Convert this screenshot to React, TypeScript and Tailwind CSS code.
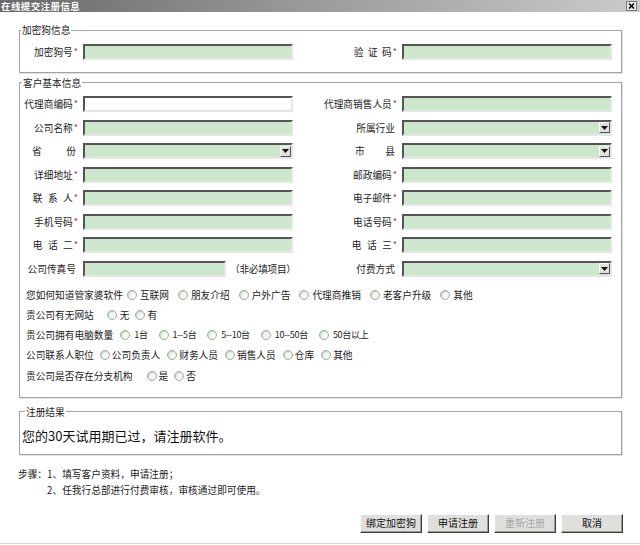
import clsx from "clsx";

const FONT = { fontFamily: '"Noto Sans CJK SC", "Noto Sans", sans-serif' };

const sunken =
	"h-[16px] border-2 border-t-[#555] border-l-[#555] border-b-[#e6e6e6] border-r-[#e6e6e6] outline-none";

const TextBox = (props: { w?: string; white?: boolean }) => (
	<input
		type="text"
		readOnly
		className={clsx(
			sunken,
			"shrink-0",
			props.w ?? "w-[210px]",
			props.white ? "bg-white" : "bg-[#cce7cc]"
		)}
	/>
);

const SelectBox = () => (
	<div className={clsx(sunken, "shrink-0 w-[210px] bg-[#cce7cc] flex items-center justify-end")}>
		<span className="w-[11px] h-[11px] bg-[#e2e0dc] border border-t-[#f8f8f8] border-l-[#f8f8f8] border-b-[#555] border-r-[#555] flex items-center justify-center">
			<svg width="7" height="4" viewBox="0 0 7 4">
				<path d="M0 0h7L3.5 4z" fill="#111" />
			</svg>
		</span>
	</div>
);

// label text, right-aligned, optional red star
const Label = (props: { text: string; star?: boolean; w: string; spread?: string }) => (
	<div className={clsx("shrink-0 flex justify-end items-center text-[#222]", props.w, !props.star && "pr-[2px]")}>
		{props.spread ? (
			<span className={clsx("flex justify-between", props.spread)}>
				{props.text.split("").map((c, i) => (
					<span key={i}>{c}</span>
				))}
			</span>
		) : (
			<span>{props.text}</span>
		)}
		{props.star && <span className="text-[#b0303a] ml-[1px] text-[9px]">*</span>}
	</div>
);

const Row = (props: { children: React.ReactNode }) => (
	<div className="flex items-center h-[23.5px]">{props.children}</div>
);

const Radio = (props: { text: string; sp: string; tx: string }) => (
	<span className={clsx("inline-flex items-center", props.sp)}>
		<span className="w-[10px] h-[10px] rounded-full border border-[#a2ada2] bg-[#f1f6f1] shadow-[inset_1px_1px_1px_#c3d3c3]" />
		<span className={props.tx}>{props.text}</span>
	</span>
);

const RadioRow = (props: {
	label: string;
	items: string[];
	gap: string;
	sp: string;
	tx: string;
	extra?: string;
}) => (
	<div className={clsx("flex items-center h-[20px] pl-[6px] whitespace-nowrap", props.extra)}>
		<span className={props.gap}>{props.label}</span>
		{props.items.map((t) => (
			<Radio key={t} text={t} sp={props.sp} tx={props.tx} />
		))}
	</div>
);

const Btn = (props: { text: string; disabled?: boolean }) => (
	<button
		className={clsx(
			"w-[62px] h-[19px] bg-[#e0dfdc] border border-t-white border-l-white border-b-[#3c3c3c] border-r-[#3c3c3c] shadow-[inset_-1px_-1px_0_#9c9c9c] text-[10px] leading-none",
			props.disabled ? "text-[#a8a8a8]" : "text-[#111]"
		)}
	>
		{props.text}
	</button>
);

export default function App() {
	return (
		<div className="w-[640px] h-[545px] bg-white overflow-hidden flex flex-col text-[9.7px] leading-[12px] text-[#222]" style={FONT}>
			{/* title bar */}
			<div className="h-[12px] shrink-0 flex items-center justify-between bg-gradient-to-r from-[#6a6a6a] via-[#9c9c9c] to-[#cbcbcb]">
				<span className="pl-[1px] text-white font-bold text-[9.5px] leading-[11px] tracking-[0.4px]">在线提交注册信息</span>
				<span className="mr-[3px] w-[11px] h-[10px] bg-[#e8e8e8] border border-[#777] flex items-center justify-center">
					<svg width="7" height="6" viewBox="0 0 7 6">
						<path d="M1 0.5l5 5M6 0.5l-5 5" stroke="#000" strokeWidth="1.5" />
					</svg>
				</span>
			</div>

			{/* 加密狗信息 */}
			<fieldset className="mt-[12px] ml-[19px] mr-[18px] border border-[#a2a2a2] shadow-[1px_1px_0_#e2e2e2] pt-[4px] pb-[8px]">
				<legend className="ml-[1px] px-[1px] leading-[12px]">加密狗信息</legend>
				<Row>
					<Label w="w-[58px]" text="加密狗号" star />
					<span className="ml-[5px]" />
					<TextBox />
					<Label w="w-[104px]" text="验证码" star spread="w-[38px]" />
					<span className="ml-[5px]" />
					<TextBox />
				</Row>
			</fieldset>

			{/* 客户基本信息 */}
			<fieldset className="mt-[4px] ml-[19px] mr-[18px] border border-[#a2a2a2] shadow-[1px_1px_0_#e2e2e2] pt-[4px] pb-[11px]">
				<legend className="ml-[2px] px-[1px] leading-[12px]">客户基本信息</legend>
				<Row>
					<Label w="w-[58px]" text="代理商编码" star />
					<span className="ml-[5px]" />
					<TextBox white />
					<Label w="w-[104px]" text="代理商销售人员" star />
					<span className="ml-[5px]" />
					<TextBox />
				</Row>
				<Row>
					<Label w="w-[58px]" text="公司名称" star />
					<span className="ml-[5px]" />
					<TextBox />
					<Label w="w-[104px]" text="所属行业" />
					<span className="ml-[5px]" />
					<SelectBox />
				</Row>
				<Row>
					<Label w="w-[58px]" text="省份" spread="w-[44px]" />
					<span className="ml-[5px]" />
					<SelectBox />
					<Label w="w-[104px]" text="市县" spread="w-[40px]" />
					<span className="ml-[5px]" />
					<SelectBox />
				</Row>
				<Row>
					<Label w="w-[58px]" text="详细地址" star />
					<span className="ml-[5px]" />
					<TextBox />
					<Label w="w-[104px]" text="邮政编码" star />
					<span className="ml-[5px]" />
					<TextBox />
				</Row>
				<Row>
					<Label w="w-[58px]" text="联系人" star spread="w-[40px]" />
					<span className="ml-[5px]" />
					<TextBox />
					<Label w="w-[104px]" text="电子邮件" star />
					<span className="ml-[5px]" />
					<TextBox />
				</Row>
				<Row>
					<Label w="w-[58px]" text="手机号码" star />
					<span className="ml-[5px]" />
					<TextBox />
					<Label w="w-[104px]" text="电话号码" star />
					<span className="ml-[5px]" />
					<TextBox />
				</Row>
				<Row>
					<Label w="w-[58px]" text="电话二" star spread="w-[40px]" />
					<span className="ml-[5px]" />
					<TextBox />
					<Label w="w-[104px]" text="电话三" star spread="w-[40px]" />
					<span className="ml-[5px]" />
					<TextBox />
				</Row>
				<Row>
					<div className="w-[273px] shrink-0 flex items-center">
						<Label w="w-[58px]" text="公司传真号" />
						<span className="ml-[5px]" />
						<TextBox w="w-[143px]" />
						<span className="shrink-0 ml-[4px] whitespace-nowrap tracking-[-0.3px]">（非必填项目）</span>
					</div>
					<Label w="w-[104px]" text="付费方式" />
					<span className="ml-[5px]" />
					<SelectBox />
				</Row>

				<div className="mt-[4px]">
					<RadioRow
						label="您如何知道管家婆软件"
						gap="mr-[-5px]"
						sp="ml-[9px]"
						tx="ml-[3px]"
						items={["互联网", "朋友介绍", "户外广告", "代理商推销", "老客户升级", "其他"]}
					/>
					<RadioRow label="贵公司有无网站" gap="mr-[8px]" sp="ml-[5px]" tx="ml-[3px]" items={["无", "有"]} />
					<RadioRow
						label="贵公司拥有电脑数量"
						gap="mr-[-4px]"
						sp="ml-[11px] text-[9px] tracking-[-0.3px]"
						tx="ml-[4px]"
						items={["1台", "1--5台", "5--10台", "10--50台", "50台以上"]}
					/>
					<RadioRow
						label="公司联系人职位"
						gap="mr-[-1px]"
						sp="ml-[7px]"
						tx="ml-[2px]"
						items={["公司负责人", "财务人员", "销售人员", "仓库", "其他"]}
					/>
					<RadioRow
						label="贵公司是否存在分支机构"
						extra="mt-[1px]"
						gap="mr-[8px]"
						sp="ml-[6px]"
						tx="ml-[2px]"
						items={["是", "否"]}
					/>
				</div>
			</fieldset>

			{/* 注册结果 */}
			<fieldset className="mt-[8px] ml-[19px] mr-[18px] border border-[#a2a2a2] shadow-[1px_1px_0_#e2e2e2] pt-[9px] pb-[9px] pl-[2px]">
				<legend className="ml-[3px] px-[1px] leading-[12px]">注册结果</legend>
				<p className="text-[13px] leading-[18px] text-[#111]">您的30天试用期已过，请注册软件。</p>
			</fieldset>

			{/* steps */}
			<div className="mt-[11px] ml-[18px] flex leading-[16px]">
				<span>步骤：</span>
				<div className="flex flex-col">
					<span>1、填写客户资料，申请注册；</span>
					<span>2、任我行总部进行付费审核，审核通过即可使用。</span>
				</div>
			</div>

			{/* buttons */}
			<div className="mt-[16px] flex justify-end gap-[5px] mr-[17px]">
				<Btn text="绑定加密狗" />
				<Btn text="申请注册" />
				<Btn text="重新注册" disabled />
				<Btn text="取消" />
			</div>

			<div className="mt-[10px] h-px bg-[#d6d6d6]" />
		</div>
	);
}
